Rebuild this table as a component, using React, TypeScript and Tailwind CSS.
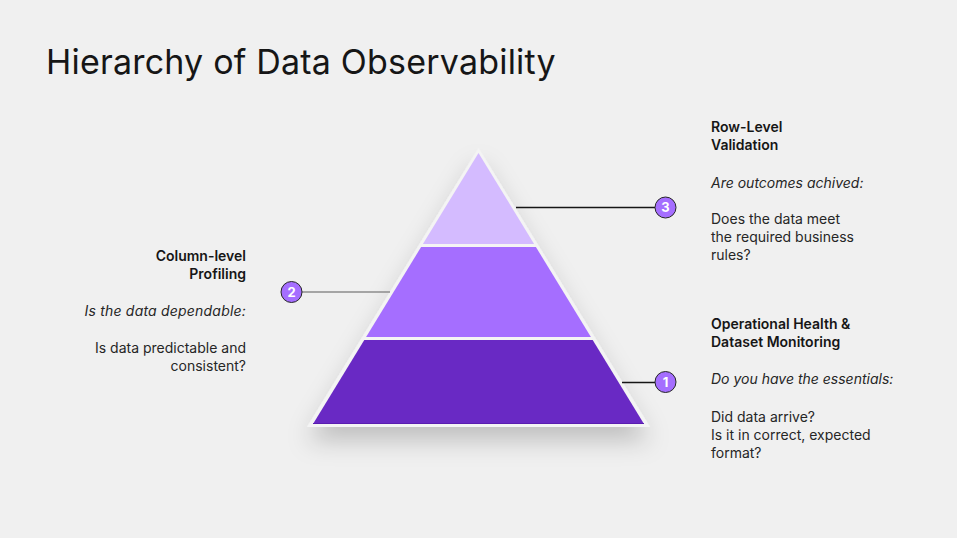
import React from "react";

const font = { fontFamily: 'Inter, "Liberation Sans", sans-serif' };

function Pyramid() {
  return (
    <svg
      width={420}
      height={360}
      viewBox="270 110 420 360"
      className="shrink-0"
    >
      <defs>
        <filter id="pshadow" x="-30%" y="-30%" width="160%" height="180%">
          <feDropShadow dx="0" dy="14" stdDeviation="12" floodColor="#000" floodOpacity="0.2" />
        </filter>
      </defs>
      <polygon points="307,427 478.5,148 650,427" fill="#f4f4f4" filter="url(#pshadow)" />
      <polygon points="478.5,153 534.1,244 422.9,244" fill="#d4bbff" />
      <polygon points="421.1,247 535.9,247 590.9,337 366.1,337" fill="#a56eff" />
      <polygon points="364.3,340 592.7,340 644,424 313,424" fill="#6929c4" />
      <line x1="313" y1="423.5" x2="644" y2="423.5" stroke="#5a1db0" strokeWidth="1" />

      <line x1="516" y1="207.5" x2="655" y2="207.5" stroke="#161616" strokeWidth="1.3" />
      <line x1="622" y1="382.5" x2="655" y2="382.5" stroke="#161616" strokeWidth="1.3" />
      <line x1="302" y1="292" x2="390" y2="292" stroke="#8d8d8d" strokeWidth="1.6" />

      {[
        { x: 665.5, y: 207.5, n: "3" },
        { x: 665.5, y: 382, n: "1" },
        { x: 291.5, y: 292, n: "2" },
      ].map((b) => (
        <g key={b.n}>
          <circle cx={b.x} cy={b.y} r={10.5} fill="#a56eff" stroke="#262626" strokeWidth="1" />
          <text
            x={b.x}
            y={b.y + 4.5}
            textAnchor="middle"
            fontSize="13"
            fontWeight="700"
            fill="#ffffff"
            style={font}
          >
            {b.n}
          </text>
        </g>
      ))}
    </svg>
  );
}

export default function App() {
  return (
    <div
      className="w-[957px] h-[538px] bg-[#f0f0f0] overflow-hidden text-[#161616]"
      style={font}
    >
      <h1 className="pl-[46px] pt-[44px] text-[34px] leading-[36px] font-normal tracking-[0.2px]">
        Hierarchy of Data Observability
      </h1>
      <div className="flex mt-[30px]">
        <div className="w-[246px] pt-[137px] text-right text-[14px] leading-[18px]">
          <div className="font-semibold">
            Column-level
            <br />
            Profiling
          </div>
          <div className="italic mt-[19px] text-[#262626] tracking-[0.2px]">Is the data dependable:</div>
          <div className="mt-[19px] text-[#262626]">
            Is data predictable and
            <br />
            consistent?
          </div>
        </div>
        <div className="ml-[24px]">
          <Pyramid />
        </div>
        <div className="ml-[21px] pt-[8px] text-[14px] leading-[18px]">
          <div className="font-semibold">
            Row-Level
            <br />
            Validation
          </div>
          <div className="italic mt-[20px] text-[#262626]">Are outcomes achived:</div>
          <div className="mt-[18px] text-[#262626]">
            Does the data meet
            <br />
            the required business
            <br />
            rules?
          </div>
          <div className="font-semibold mt-[51px]">
            Operational Health &amp;
            <br />
            Dataset Monitoring
          </div>
          <div className="italic mt-[19px] text-[#262626]">Do you have the essentials:</div>
          <div className="mt-[20px] text-[#262626]">
            Did data arrive?
            <br />
            Is it in correct, expected
            <br />
            format?
          </div>
        </div>
      </div>
    </div>
  );
}
